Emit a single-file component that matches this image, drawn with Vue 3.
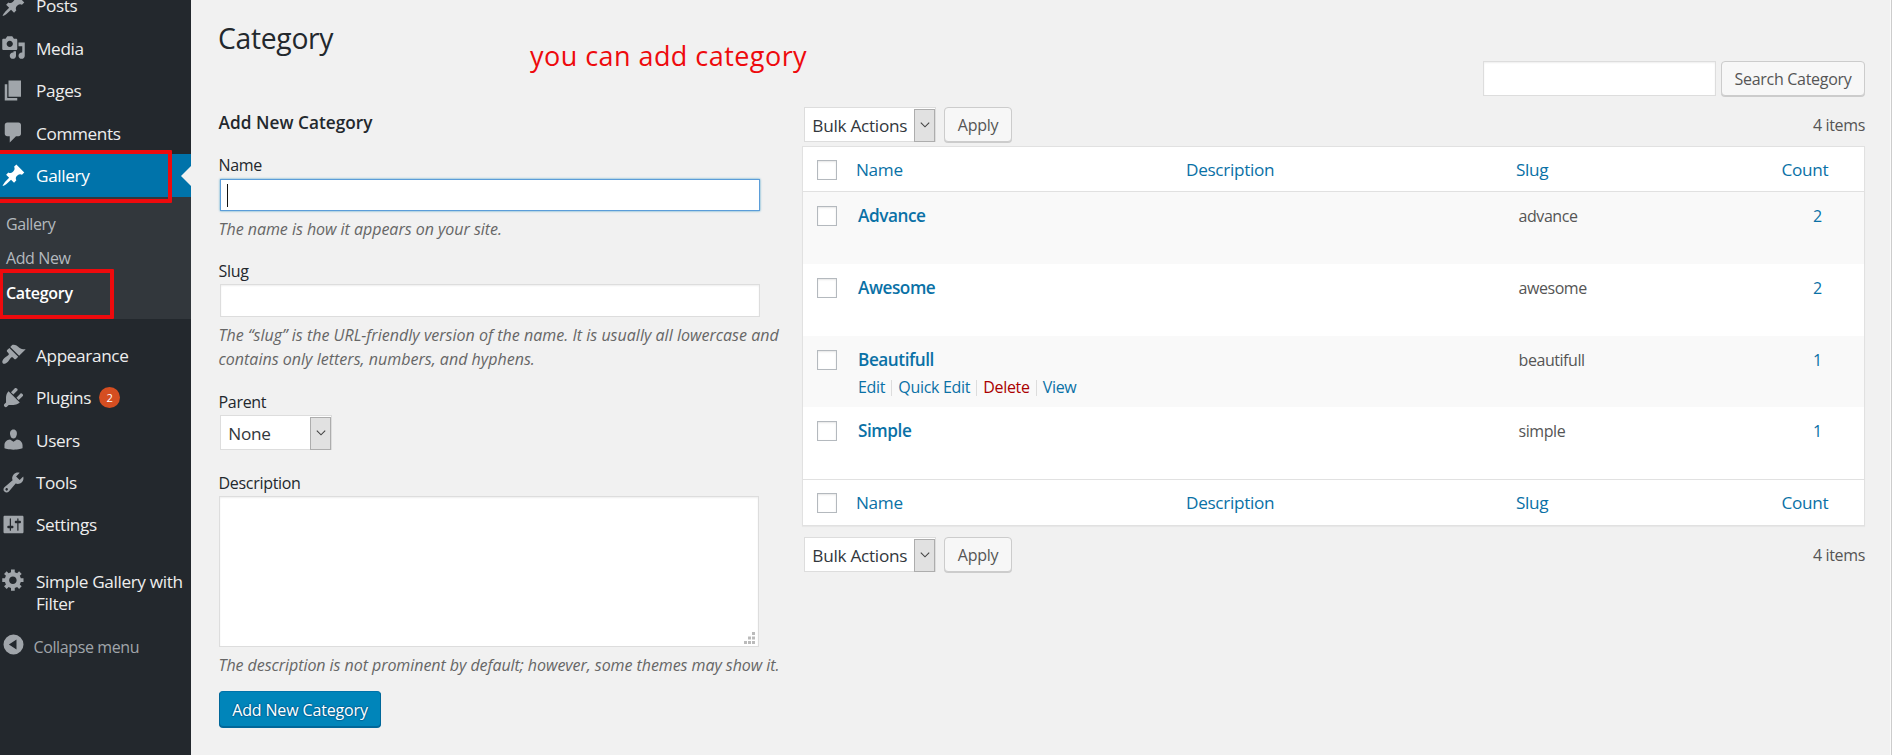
<script setup>
const icons = {
  pin: 'M10.44 3.02l1.82-1.82 6.36 6.35-1.83 1.82c-1.05-.68-2.48-.57-3.41.36l-.75.75c-.92.93-1.04 2.35-.35 3.41l-1.83 1.82-2.41-2.41-2.8 2.79c-.42.42-3.38 2.71-3.8 2.29s1.86-3.39 2.28-3.81l2.79-2.79L4.1 9.36l1.83-1.82c1.05.69 2.48.57 3.4-.36l.75-.75c.93-.92 1.05-2.35.36-3.41z',
  media: 'M13 11V4c0-.55-.45-1-1-1h-1.67L9 1H5L3.67 3H2c-.55 0-1 .45-1 1v7c0 .55.45 1 1 1h10c.55 0 1-.45 1-1zM7 4.5c1.38 0 2.5 1.12 2.5 2.5S8.38 9.5 7 9.5 4.5 8.38 4.5 7 5.62 4.5 7 4.5zM14 6h5v10.5c0 1.38-1.12 2.5-2.5 2.5S14 17.88 14 16.5s1.12-2.5 2.5-2.5c.17 0 .34.02.5.05V9h-3V6zm-4 8.05V13h2v3.5c0 1.38-1.12 2.5-2.5 2.5S7 17.88 7 16.5 8.12 14 9.5 14c.17 0 .34.02.5.05z',
  page: 'M6 15V2h10v13H6zm-1 1h8v2H3V5h2v11z',
  comment: 'M5 2h9c1.1 0 2 .9 2 2v7c0 1.1-.9 2-2 2h-2l-5 5v-5H5c-1.1 0-2-.9-2-2V4c0-1.1.9-2 2-2z',
  brush: 'M14.48 11.06L7.41 3.99l1.5-1.5c.5-.56 2.3-.47 3.51.32 1.21.8 1.43 1.28 2.91 2.1 1.18.64 2.45 1.26 4.45.85zm-.71.71L6.7 4.7 4.93 6.47c-.39.39-.39 1.02 0 1.41l1.06 1.06c.39.39.39 1.03 0 1.42-.6.6-1.43 1.11-2.21 1.69-.35.26-.7.53-1.01.84C1.43 14.23.4 16.08 1.4 17.07c.99 1 2.84-.03 4.18-1.36.31-.31.58-.66.85-1.02.57-.78 1.08-1.61 1.69-2.21.39-.39 1.02-.39 1.41 0l1.06 1.06c.39.39 1.02.39 1.41 0z',
  plug: 'M13.11 4.36L9.87 7.6 8 5.73l3.24-3.24c.35-.34 1.05-.2 1.56.32.52.51.66 1.21.31 1.55zm-8 1.77l.91-1.12 9.01 9.01-1.19.84c-.71.71-2.63 1.16-3.82 1.16H6.14L4.9 17.26c-.59.59-1.54.59-2.12 0-.59-.58-.59-1.53 0-2.12l1.24-1.24v-3.88c0-1.13.4-3.19 1.09-3.89zm7.26 3.97l3.24-3.24c.34-.35 1.04-.21 1.55.31.52.51.66 1.21.31 1.55l-3.24 3.25z',
  user: 'M10 9.25c-2.27 0-2.73-3.44-2.73-3.44C7 4.02 7.82 2 9.97 2c2.16 0 2.98 2.02 2.71 3.81 0 0-.41 3.44-2.68 3.44zm0 2.57L12.72 10c2.39 0 4.52 2.33 4.52 4.53v2.49s-3.65 1.13-7.24 1.13c-3.65 0-7.24-1.13-7.24-1.13v-2.49c0-2.25 1.94-4.48 4.47-4.48z',
  wrench: 'M16.68 9.77c-1.34 1.34-3.3 1.67-4.95.99l-5.41 6.52c-.99.99-2.59.99-3.58 0s-.99-2.59 0-3.57l6.52-5.42c-.68-1.65-.35-3.61.99-4.95 1.28-1.28 3.12-1.62 4.72-1.06l-2.89 2.89 2.82 2.82 2.86-2.87c.53 1.58.18 3.39-1.08 4.65zM3.81 16.21c.4.39 1.04.39 1.43 0 .4-.4.4-1.04 0-1.43-.39-.4-1.03-.4-1.43 0-.39.39-.39 1.03 0 1.43z',
  sliders: 'M18 16V4c0-.55-.45-1-1-1H3c-.55 0-1 .45-1 1v12c0 .55.45 1 1 1h14c.55 0 1-.45 1-1zM8 11h1c.55 0 1 .45 1 1s-.45 1-1 1H8v1.5c0 .28-.22.5-.5.5s-.5-.22-.5-.5V13H6c-.55 0-1-.45-1-1s.45-1 1-1h1V5.5c0-.28.22-.5.5-.5s.5.22.5.5V11zm5-2h-1c-.55 0-1-.45-1-1s.45-1 1-1h1V5.5c0-.28.22-.5.5-.5s.5.22.5.5V7h1c.55 0 1 .45 1 1s-.45 1-1 1h-1v5.5c0 .28-.22.5-.5.5s-.5-.22-.5-.5V9z',
  gear: 'M18 12h-2.18c-.17.7-.44 1.35-.81 1.93l1.54 1.54-2.1 2.1-1.54-1.54c-.58.36-1.23.63-1.91.79V19H8v-2.18c-.68-.16-1.33-.43-1.91-.79l-1.54 1.54-2.12-2.12 1.54-1.54c-.36-.58-.63-1.23-.79-1.91H1V9.03h2.17c.16-.7.44-1.35.8-1.94L2.43 5.55l2.1-2.1 1.54 1.54c.58-.37 1.24-.64 1.93-.81V2h3v2.18c.68.16 1.33.43 1.91.79l1.54-1.54 2.12 2.12-1.54 1.54c.36.59.64 1.24.8 1.94H18V12zm-8.5 1.5c1.66 0 3-1.34 3-3s-1.34-3-3-3-3 1.34-3 3 1.34 3 3 3z',
  collapse: 'M10 2a8 8 0 1 1 0 16 8 8 0 0 1 0-16zm2.4 4L6.3 10l6.1 4z'
}

const topMenu = [
  { label: 'Posts', icon: 'pin' },
  { label: 'Media', icon: 'media' },
  { label: 'Pages', icon: 'page' },
  { label: 'Comments', icon: 'comment' },
  { label: 'Gallery', icon: 'pin', current: true }
]
const lowerMenu = [
  { label: 'Appearance', icon: 'brush' },
  { label: 'Plugins', icon: 'plug', badge: 2 },
  { label: 'Users', icon: 'user' },
  { label: 'Tools', icon: 'wrench' },
  { label: 'Settings', icon: 'sliders' }
]
const rows = [
  { name: 'Advance', slug: 'advance', count: 2 },
  { name: 'Awesome', slug: 'awesome', count: 2 },
  { name: 'Beautifull', slug: 'beautifull', count: 1, actions: true },
  { name: 'Simple', slug: 'simple', count: 1 }
]
</script>

<template>
  <div class="page">
    <nav class="sidebar">
      <div class="menu first">
        <a v-for="m in topMenu" :key="m.label" class="item" :class="{ current: m.current }">
          <svg class="icon" viewBox="0 0 20 20"><path :d="icons[m.icon]" /></svg>
          <span class="label">{{ m.label }}</span>
          <i v-if="m.current" class="notch"></i>
          <i v-if="m.current" class="mark mark-parent"></i>
        </a>
      </div>
      <div class="submenu">
        <a class="sub">Gallery</a>
        <a class="sub">Add New</a>
        <a class="sub active">Category<i class="mark mark-child"></i></a>
      </div>
      <div class="menu lower">
        <a v-for="m in lowerMenu" :key="m.label" class="item">
          <svg class="icon" viewBox="0 0 20 20"><path :d="icons[m.icon]" /></svg>
          <span class="label">{{ m.label }}</span>
          <span v-if="m.badge" class="badge">{{ m.badge }}</span>
        </a>
      </div>
      <a class="item tall">
        <svg class="icon" viewBox="0 0 20 20"><path :d="icons.gear" /></svg>
        <span class="label">Simple Gallery with<br />Filter</span>
      </a>
      <a class="item collapse">
        <svg class="icon" viewBox="0 0 20 20"><path fill-rule="evenodd" :d="icons.collapse" /></svg>
        <span class="label">Collapse menu</span>
      </a>
    </nav>

    <main class="main">
      <h1>Category</h1>
      <div class="annotation">you can add category</div>

      <div class="columns">
        <section class="form">
          <h2>Add New Category</h2>
          <div class="field name">
            <label>Name</label>
            <div class="input focused"><i class="caret"></i></div>
            <p>The name is how it appears on your site.</p>
          </div>
          <div class="field slug">
            <label>Slug</label>
            <div class="input"></div>
            <p>The “slug” is the URL-friendly version of the name. It is usually all lowercase and<br />contains only letters, numbers, and hyphens.</p>
          </div>
          <div class="field parent">
            <label>Parent</label>
            <div class="select small">
              <span>None</span>
              <b><svg viewBox="0 0 10 6"><path d="M.8.6L5 4.8 9.2.6" /></svg></b>
            </div>
          </div>
          <div class="field description">
            <label>Description</label>
            <div class="textarea">
              <svg class="grip" viewBox="0 0 11 12"><path d="M8 0h3v3H8zM4 4.5h3v3H4zM8 4.5h3v3H8zM0 9h3v3H0zM4 9h3v3H4zM8 9h3v3H8z" /></svg>
            </div>
            <p>The description is not prominent by default; however, some themes may show it.</p>
          </div>
          <button class="primary">Add New Category</button>
        </section>

        <section class="list">
          <div class="search">
            <div class="searchbox"></div>
            <button class="btn wide">Search Category</button>
          </div>
          <div class="tablenav">
            <div class="select">
              <span>Bulk Actions</span>
              <b><svg viewBox="0 0 10 6"><path d="M.8.6L5 4.8 9.2.6" /></svg></b>
            </div>
            <button class="btn">Apply</button>
            <span class="total">4 items</span>
          </div>
          <div class="table">
            <div class="tr head">
              <i class="check"></i><a>Name</a><a>Description</a><a>Slug</a><a class="c">Count</a>
            </div>
            <div v-for="(r, i) in rows" :key="r.slug" class="tr row" :class="{ odd: i % 2 === 0 }">
              <i class="check"></i>
              <div class="cell">
                <a class="title">{{ r.name }}</a>
                <div v-if="r.actions" class="actions">
                  <a>Edit</a><s></s><a>Quick Edit</a><s></s><a class="delete">Delete</a><s></s><a>View</a>
                </div>
              </div>
              <span></span>
              <span class="slugtext">{{ r.slug }}</span>
              <a class="count">{{ r.count }}</a>
            </div>
            <div class="tr head foot">
              <i class="check"></i><a>Name</a><a>Description</a><a>Slug</a><a class="c">Count</a>
            </div>
          </div>
          <div class="tablenav bottom">
            <div class="select">
              <span>Bulk Actions</span>
              <b><svg viewBox="0 0 10 6"><path d="M.8.6L5 4.8 9.2.6" /></svg></b>
            </div>
            <button class="btn">Apply</button>
            <span class="total">4 items</span>
          </div>
        </section>
      </div>
    </main>
  </div>
</template>

<style>
body {
  margin: 0;
  overflow: hidden;
}
</style>

<style scoped>
* {
  box-sizing: border-box;
}
.page {
  display: flex;
  width: 1892px;
  height: 755px;
  overflow: hidden;
  background: #f1f1f1;
  color: #444;
  font-family: "Open Sans", "Noto Sans", sans-serif;
  font-size: 16px;
  letter-spacing: -0.3px;
  white-space: nowrap;
}

/* Admin menu */
.sidebar {
  width: 191px;
  flex: none;
  background: #23282d;
  overflow: hidden;
}
.menu.first {
  margin-top: -15.6px;
}
.item {
  position: relative;
  display: flex;
  height: 42.4px;
  padding-left: 1px;
  color: #eee;
  font-size: 17.2px;
  letter-spacing: -0.36px;
  line-height: 44.6px;
}
.icon {
  width: 25px;
  height: 25px;
  margin: 8.7px 10px 0 0;
  flex: none;
  fill: #a0a5aa;
}
.item.current {
  height: 43px;
  background: #0073aa;
  color: #fff;
}
.current .icon {
  fill: #fff;
}
.notch {
  position: absolute;
  right: 0;
  top: 12px;
  border: 10px solid transparent;
  border-left: 0;
  border-right-color: #f1f1f1;
}
.mark {
  position: absolute;
  border: 4px solid #ee0a0d;
  border-radius: 1px;
}
.mark-parent {
  left: -5px;
  top: -4px;
  width: 177px;
  height: 53px;
}
.mark-child {
  left: -1px;
  top: -6.5px;
  width: 115px;
  height: 50px;
}
.submenu {
  height: 122px;
  padding-top: 9.8px;
  background: #32373c;
}
.sub {
  position: relative;
  display: block;
  height: 34.4px;
  padding-left: 6px;
  color: #b4b9be;
  font-size: 16px;
  letter-spacing: -0.4px;
  line-height: 35.6px;
}
.sub.active {
  color: #fff;
  font-weight: 600;
  letter-spacing: -0.3px;
}
.lower {
  margin-top: 14.8px;
}
.badge {
  width: 21px;
  height: 21px;
  margin: 11px 0 0 8px;
  border-radius: 50%;
  background: #d54e21;
  color: #fff;
  font-size: 11.2px;
  letter-spacing: 0;
  line-height: 21px;
  text-align: center;
}
.tall {
  height: 65px;
  margin-top: 13px;
  line-height: 22px;
}
.tall .label {
  padding-top: 12.5px;
}
.collapse {
  height: 45px;
  color: #a0a5aa;
  font-size: 16px;
  letter-spacing: -0.38px;
  line-height: 46px;
}
.collapse .icon {
  margin-right: 7.5px;
}

/* Page heading */
.main {
  position: relative;
  flex: 1;
  padding: 18px 26px 0 27px;
  border-right: 1px solid #ccc;
  box-shadow: inset -1px 0 0 #fafafa;
}
h1 {
  margin: 0;
  height: 40px;
  color: #23282d;
  font-size: 28.3px;
  font-weight: 400;
  letter-spacing: -0.3px;
  line-height: 41px;
}
.annotation {
  position: absolute;
  left: 339px;
  top: 36px;
  color: #ee0a0d;
  font-size: 27px;
  letter-spacing: 0.45px;
  line-height: 40px;
}
.columns {
  display: flex;
}

/* Category form */
.form {
  width: 585px;
  flex: none;
  padding-top: 54px;
}
h2 {
  margin: 0 0 19px;
  color: #23282d;
  font-size: 17.2px;
  font-weight: 600;
  letter-spacing: 0.05px;
  line-height: 22px;
}
h2,
label,
.field p {
  padding-left: 0.5px;
}
label {
  display: block;
  height: 22px;
  color: #23282d;
  line-height: 24px;
}
.field p {
  margin: 5px 0 0;
  color: #666;
  font-size: 16px;
  font-style: italic;
  letter-spacing: -0.03px;
  line-height: 24px;
}
.input {
  width: 540px;
  height: 33px;
  margin: 3px 0 0 2px;
  border: 1px solid #ddd;
  background: #fff;
  box-shadow: inset 0 1px 2px rgba(0, 0, 0, 0.07);
}
.input.focused {
  height: 32px;
  margin-top: 4px;
  padding: 4px 0 0 6px;
  border-color: #5b9dd9;
  box-shadow: 0 0 2px rgba(30, 140, 190, 0.8);
}
.caret {
  display: block;
  width: 1px;
  height: 23px;
  background: #111;
}
.name {
  margin-bottom: 18px;
}
.name p {
  margin-top: 6px;
}
.slug {
  margin-bottom: 19px;
}
.slug p {
  margin-top: 6px;
  letter-spacing: 0.02px;
}
.parent {
  margin-bottom: 21px;
}
.description p {
  margin-top: 6px;
  letter-spacing: -0.055px;
}
.select {
  display: flex;
  width: 132px;
  height: 35px;
  padding: 1px 1px 1px 8px;
  border: 1px solid #ddd;
  background: #fff;
  color: #32373c;
  font-size: 17.2px;
  letter-spacing: -0.27px;
  line-height: 33.5px;
}
.select span {
  flex: 1;
  margin-left: -0.7px;
}
.select b {
  display: flex;
  width: 21px;
  height: 33px;
  margin: -0.5px -1px 0 0;
  align-items: center;
  justify-content: center;
  border: 1px solid #adadad;
  background: #e1e1e1;
}
.select svg {
  width: 10px;
  height: 6px;
  fill: none;
  stroke: #444;
  stroke-width: 1.1;
}
.select.small {
  width: 112px;
  margin: 3px 0 0 2px;
}
.textarea {
  display: flex;
  width: 540px;
  height: 151px;
  margin: 3px 0 0 1px;
  padding: 0 3px 2px 0;
  align-items: flex-end;
  justify-content: flex-end;
  border: 1px solid #ddd;
  background: #fff;
  box-shadow: inset 0 1px 2px rgba(0, 0, 0, 0.07);
}
.grip {
  width: 11px;
  height: 12px;
  fill: #bbb;
}
button {
  padding: 0;
  font-family: inherit;
  font-size: 16px;
  letter-spacing: -0.3px;
}
.primary {
  display: block;
  width: 162px;
  height: 36px;
  margin: 14px 0 0 1px;
  border: 1px solid #006799;
  border-top-color: #0073aa;
  border-radius: 4px;
  background: #0085ba;
  box-shadow: 0 1px 0 #006799;
  color: #fff;
  letter-spacing: -0.15px;
  line-height: 36px;
  text-shadow: 0 -1px 1px #006799, 1px 0 1px #006799, 0 1px 1px #006799, -1px 0 1px #006799;
}

/* Category list */
.list {
  flex: 1;
  padding-top: 3px;
}
.search {
  display: flex;
  justify-content: flex-end;
  gap: 5px;
}
.searchbox {
  width: 233px;
  height: 35px;
  border: 1px solid #ddd;
  background: #fff;
  box-shadow: inset 0 1px 2px rgba(0, 0, 0, 0.07);
}
.btn {
  width: 68px;
  height: 35px;
  border: 1px solid #ccc;
  border-radius: 4px;
  background: #f7f7f7;
  box-shadow: 0 1px 0 #ccc;
  color: #555;
  line-height: 35px;
}
.btn.wide {
  width: 144px;
  letter-spacing: -0.3px;
}
.tablenav {
  display: flex;
  height: 35px;
  margin: 11px 0 4px 1px;
}
.tablenav .btn {
  margin-left: 8px;
}
.total {
  margin-left: auto;
  color: #555;
  letter-spacing: -0.35px;
  line-height: 37px;
}
.table {
  width: 1063px;
  margin-left: -1px;
  border: 1px solid #e1e1e1;
  background: #fff;
  box-shadow: 0 1px 1px rgba(0, 0, 0, 0.04);
}
.tr {
  display: grid;
  grid-template-columns: 53px 330px 330px 222px 1fr;
}
.check {
  width: 20px;
  height: 20px;
  margin-left: 14px;
  border: 1px solid #b4b9be;
  background: #fff;
  box-shadow: inset 0 1px 2px rgba(0, 0, 0, 0.1);
}
.head {
  height: 45px;
  border-bottom: 1px solid #e1e1e1;
  color: #0a71a6;
  font-size: 17.2px;
  letter-spacing: -0.32px;
  line-height: 45.6px;
}
.head .check {
  margin-top: 13px;
}
.head .c {
  padding-left: 43.5px;
}
.foot {
  height: 46px;
  border-top: 1px solid #e1e1e1;
  border-bottom: 0;
}
.row {
  height: 71.8px;
  color: #555;
  line-height: 22px;
}
.row.odd {
  background: #f9f9f9;
}
.row .check {
  margin-top: 14px;
}
.row a {
  color: #0a71a6;
}
.cell {
  padding: 13px 0 0 2px;
}
.title {
  display: block;
  font-size: 17.2px;
  font-weight: 600;
  letter-spacing: -0.45px;
  line-height: 22px;
}
.actions {
  display: flex;
  margin-top: 5px;
  line-height: 22px;
}
.actions s {
  width: 1px;
  height: 16px;
  margin: 4px 6px 0;
  background: #ddd;
}
.row .delete {
  color: #a00;
}
.slugtext {
  padding: 13px 0 0 2.6px;
  letter-spacing: -0.45px;
}
.count {
  padding: 13px 0 0 75px;
}
.bottom {
  margin-top: 11px;
}
</style>
